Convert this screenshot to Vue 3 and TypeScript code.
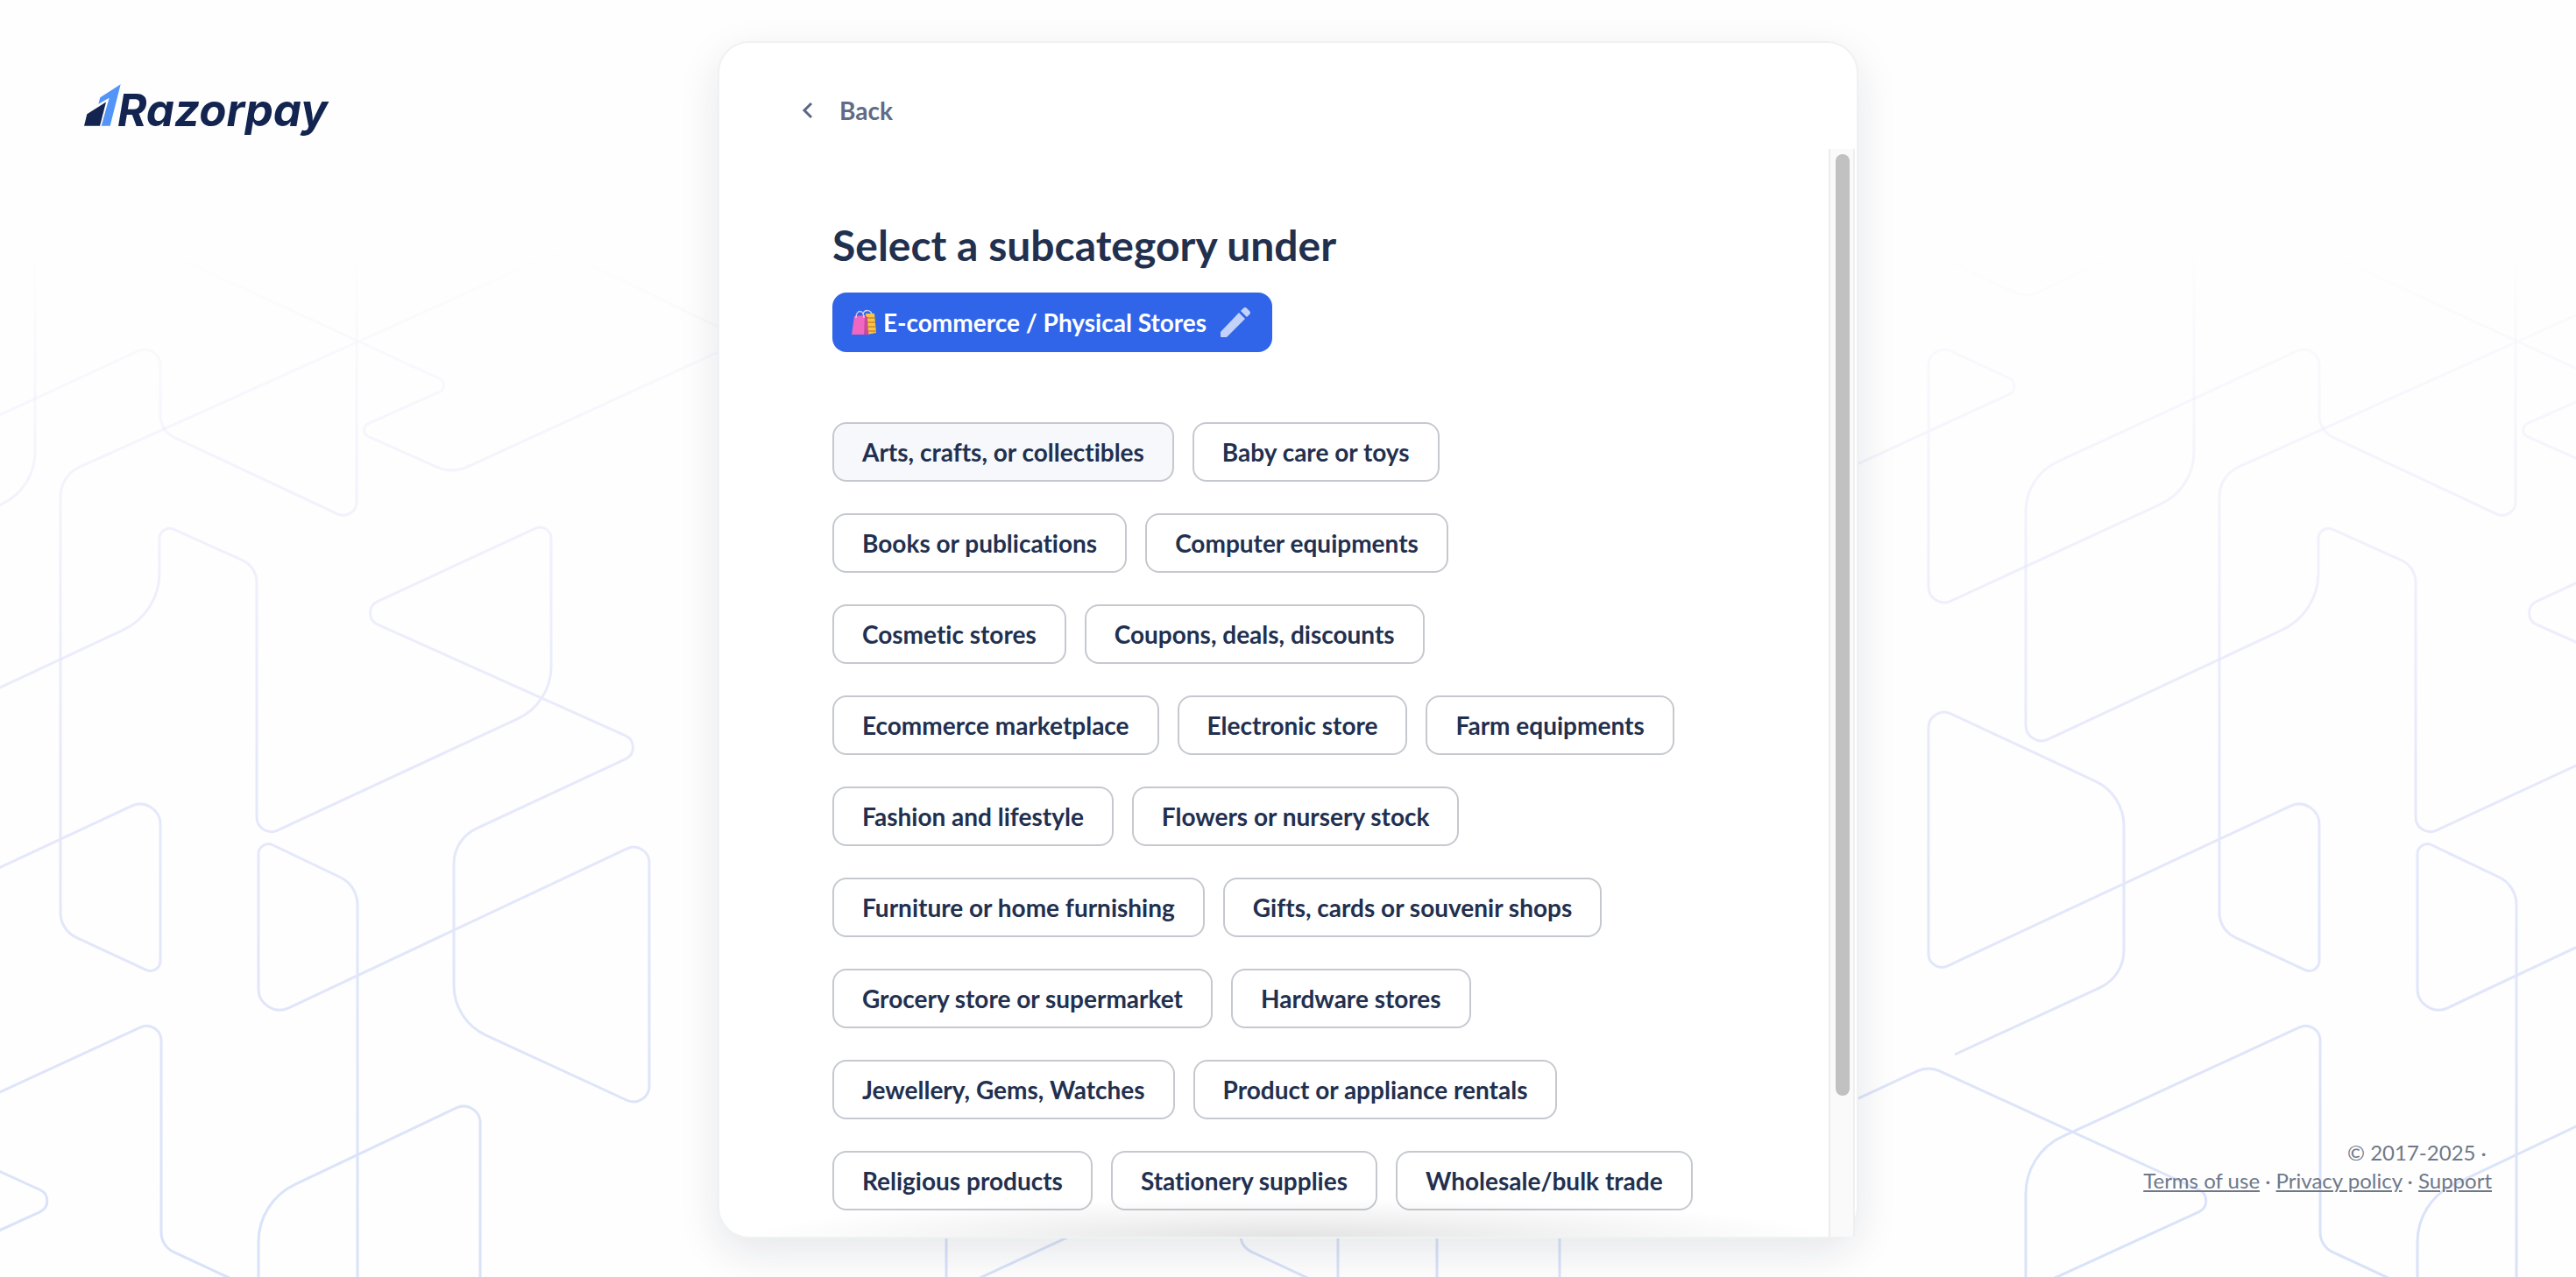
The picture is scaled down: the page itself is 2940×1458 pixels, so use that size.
<script setup lang="ts">
import { ref } from 'vue'

type Corner = [x: number, y: number, cut?: number]

const rows: string[][] = [
  ['Arts, crafts, or collectibles', 'Baby care or toys'],
  ['Books or publications', 'Computer equipments'],
  ['Cosmetic stores', 'Coupons, deals, discounts'],
  ['Ecommerce marketplace', 'Electronic store', 'Farm equipments'],
  ['Fashion and lifestyle', 'Flowers or nursery stock'],
  ['Furniture or home furnishing', 'Gifts, cards or souvenir shops'],
  ['Grocery store or supermarket', 'Hardware stores'],
  ['Jewellery, Gems, Watches', 'Product or appliance rentals'],
  ['Religious products', 'Stationery supplies', 'Wholesale/bulk trade'],
]

const focused = ref('Arts, crafts, or collectibles')

// Joins the corners with straight lines; each corner is replaced by an arc
// that starts and ends `cut` pixels away from it.
function rounded(corners: Corner[]): string {
  let d = `M${corners[0][0]} ${corners[0][1]}`
  for (let i = 1; i < corners.length - 1; i++) {
    const [px, py] = corners[i - 1]
    const [x, y, cut = 24] = corners[i]
    const [nx, ny] = corners[i + 1]
    const a = Math.hypot(px - x, py - y)
    const b = Math.hypot(nx - x, ny - y)
    const ux = (px - x) / a
    const uy = (py - y) / a
    const vx = (nx - x) / b
    const vy = (ny - y) / b
    const half = Math.acos(ux * vx + uy * vy) / 2
    const r = cut * Math.tan(half)
    const sweep = ux * vy - uy * vx < 0 ? 1 : 0
    d += `L${x + ux * cut} ${y + uy * cut}A${r} ${r} 0 0 ${sweep} ${x + vx * cut} ${y + vy * cut}`
  }
  const last = corners[corners.length - 1]
  return `${d}L${last[0]} ${last[1]}`
}

const lattice: string[] = (
  [
    [
      [407, 270], [407, 597, 24], [183, 492, 18], [183, 389, 28], [-152, 544, 40], [-152, 856, 28],
      [182, 700, 46], [182, 597, 18], [293, 647, 18], [293, 959, 26], [629, 803, 42], [629, 595, 20],
      [402, 700, 32], [743, 853, 32], [518, 958, 28], [518, 1165, 40], [741, 1268, 28], [741, 957, 28],
      [295, 1167, 38], [295, 957, 18], [408, 1011, 22], [408, 1500],
    ],
    [
      [150, 270], [518, 440, 18], [404, 491, 18], [516, 541, 20], [850, 388, 34], [640, 286, 20],
      [69, 543, 24], [69, 1062, 20], [183, 1115, 18], [183, 905, 36], [-263, 1113, 24], [-263, 803, 28],
      [-40, 907, 36], [-40, 1115, 30], [-233, 1204],
    ],
    [[40, 270], [40, 558, 42], [-263, 698, 28], [-263, 389, 28], [-151, 441, 22], [-464, 585]],
    [[-290, 275], [-152, 340, 16], [-12, 275]],
    [[-152, 1500], [-152, 1317, 46], [184, 1162, 26], [184, 1423, 16], [350, 1500]],
    [[-550, 1350], [-263, 1217, 14], [73, 1371, 30], [-208, 1500]],
    [[295, 1500], [295, 1372, 46], [548, 1252, 30], [548, 1500]],
  ] as Corner[][]
).map(rounded)

const underCard: string[] = [
  'M1080 1380V1500',
  'M1276 1386L1030 1500',
  'M1416 1380V1410Q1416 1424 1430 1430L1580 1500',
  'M1527 1380V1500',
  'M1640 1380V1500',
  'M1780 1380V1500',
]
</script>

<template>
  <div class="page">
    <svg class="lattice" viewBox="0 0 2940 1458" preserveAspectRatio="xMinYMin slice" aria-hidden="true">
      <defs>
        <linearGradient id="fade" gradientUnits="userSpaceOnUse" x1="0" y1="280" x2="0" y2="1458">
          <stop offset="0" stop-color="#e4e4fa" stop-opacity="0" />
          <stop offset="0.2" stop-color="#e4e4fa" stop-opacity="0.38" />
          <stop offset="0.5" stop-color="#e0e3fa" stop-opacity="0.78" />
          <stop offset="1" stop-color="#d8e2f8" />
        </linearGradient>
      </defs>
      <g fill="none" stroke="url(#fade)" stroke-width="3">
        <g>
          <path v-for="(d, i) in lattice" :key="i" :d="d" />
        </g>
        <g transform="translate(2464 0)">
          <path v-for="(d, i) in lattice" :key="i" :d="d" />
        </g>
        <path v-for="d in underCard" :key="d" :d="d" />
      </g>
    </svg>

    <header class="brand">
      <svg class="brand-mark" viewBox="108 79 126 143" aria-hidden="true">
        <path d="M233 79L197 222H167L194 126L157 147L163 124Z" fill="#5394f9" />
        <path d="M183 140L118 181L108 222H162Z" fill="#12244f" />
      </svg>
      <span class="brand-name">Razorpay</span>
    </header>

    <main class="card">
      <div class="card-head">
        <button class="back" type="button">
          <svg class="chevron" viewBox="0 0 16 20" aria-hidden="true">
            <path d="M13 2L5 10L13 18" fill="none" stroke="#5a6684" stroke-width="3" />
          </svg>
          Back
        </button>
      </div>

      <div class="card-body">
        <section class="content">
          <h1>Select a subcategory under</h1>
          <button class="category" type="button">
            <svg class="bags" viewBox="0 0 28 30" aria-hidden="true">
              <path d="M13 6C13 0 23 0 23 7" fill="none" stroke="#d8d3ee" stroke-width="1.5" />
              <path d="M16 5L26 5L28 27L17 29Z" fill="#f6c544" />
              <path d="M18 10H26M18 15H27M18 20H27M18 25H28" stroke="#c98a2b" stroke-width="1.5" />
              <path d="M3 8L15 7L20 29L0 29Z" fill="#ef67c0" />
              <path d="M15 7L18 9L19 29L14 29Z" fill="#c94a98" />
              <path d="M5 10C5 0 14 0 14 10" fill="none" stroke="#d8c6ee" stroke-width="1.5" />
            </svg>
            <span class="category-name">E-commerce / Physical Stores</span>
            <svg class="pencil" viewBox="0 0 34 34" aria-hidden="true">
              <path d="M0 28V33Q0 34 1 34H7L28 13L21 6Z" fill="#c3d2fb" />
              <path d="M23 4L26 1Q28 -1 30 1L33 4Q35 6 33 8L30 11Z" fill="#c3d2fb" />
            </svg>
          </button>

          <div class="rows">
            <div v-for="(row, i) in rows" :key="i" class="row">
              <button
                v-for="name in row"
                :key="name"
                type="button"
                class="chip"
                :class="{ focused: name === focused }"
                @click="focused = name"
              >
                {{ name }}
              </button>
            </div>
          </div>
        </section>
        <div class="track" aria-hidden="true"><div class="thumb"></div></div>
        <div class="more" aria-hidden="true"></div>
      </div>
    </main>

    <footer class="legal">
      <div>© 2017-2025 ·&nbsp;</div>
      <div><a href="#terms">Terms of use</a> · <a href="#privacy">Privacy policy</a> · <a href="#support">Support</a></div>
    </footer>
  </div>
</template>

<style>
body {
  background: #fefefe;
}
</style>

<style scoped>
.page {
  position: relative;
  display: grid;
  grid-template-columns: 1fr minmax(0, 1302px) 1fr;
  box-sizing: border-box;
  height: 100vh;
  padding: 47px 0 44px;
  overflow: hidden;
  font-family: Lato, 'Noto Sans', sans-serif;
  font-variant-ligatures: none;
  color: #22304f;
}

.lattice {
  position: absolute;
  inset: 0;
  width: 100%;
  height: 100%;
}

.brand {
  position: relative;
  display: flex;
  align-items: flex-end;
  align-self: start;
  height: 97px;
  padding-left: 96px;
}

.brand-mark {
  width: 42px;
  height: 48px;
}

.brand-name {
  margin-left: -4px;
  font: italic 700 51px/36px Inter, 'Liberation Sans', sans-serif;
  color: #12244f;
}

.card {
  position: relative;
  display: flex;
  flex-direction: column;
  min-height: 0;
  border: 2px solid #f0f1f3;
  border-radius: 36px;
  background: #fff;
  box-shadow: 0 16px 48px rgba(23, 31, 60, 0.1);
}

.card-head {
  display: flex;
  flex: none;
  align-items: flex-start;
  height: 121px;
  box-sizing: border-box;
  padding: 59px 92px 0;
}

button {
  font: 700 28px/36px Lato, 'Noto Sans', sans-serif;
  font-variant-ligatures: none;
  color: inherit;
  cursor: pointer;
}

.back {
  display: flex;
  align-items: center;
  gap: 29px;
  padding: 0;
  border: 0;
  background: none;
  color: #5f6b87;
}

.chevron {
  width: 16px;
  height: 20px;
}

.card-body {
  position: relative;
  display: flex;
  flex: 1;
  min-height: 0;
  margin-right: 2px;
}

.content {
  flex: 1;
  min-width: 0;
  padding: 82px 60px 0 129px;
  overflow: hidden;
}

h1 {
  margin: 0 0 26px;
  font-size: 48px;
  font-weight: 700;
  line-height: 56px;
}

.category {
  display: flex;
  align-items: center;
  height: 68px;
  padding: 0 25px 0 22px;
  border: 0;
  border-radius: 16px;
  background: #3065e9;
  color: #fff;
}

.bags {
  width: 28px;
  height: 30px;
}

.category-name {
  margin: 0 16px 0 8px;
}

.pencil {
  width: 34px;
  height: 34px;
}

.rows {
  display: flex;
  flex-direction: column;
  gap: 36px;
  margin-top: 80px;
}

.row {
  display: flex;
  gap: 21px;
}

.chip {
  height: 68px;
  padding: 0 32px;
  border: 2px solid #c5c9cf;
  border-radius: 16px;
  background: #fff;
  white-space: nowrap;
}

.chip.focused {
  background: #f6f8fb;
}

.track {
  box-sizing: border-box;
  width: 30px;
  padding: 6px 6px 0;
  border-right: 2px solid #efefef;
  border-left: 2px solid #ececec;
  background: #fafafa;
}

.thumb {
  width: 16px;
  height: 87%;
  border-radius: 8px;
  background: #c1c1c1;
}

.more {
  position: absolute;
  right: 30px;
  bottom: 0;
  left: 32px;
  height: 44px;
  background: radial-gradient(ellipse 50% 100% at 50% 100%, rgba(0, 0, 0, 0.11), rgba(0, 0, 0, 0.05) 50%, transparent);
  pointer-events: none;
}

.legal {
  position: relative;
  align-self: end;
  padding: 0 96px 50px 0;
  font-size: 24px;
  line-height: 32px;
  text-align: right;
  color: #6f7889;
}

.legal a {
  color: inherit;
  text-decoration: underline;
}
</style>
